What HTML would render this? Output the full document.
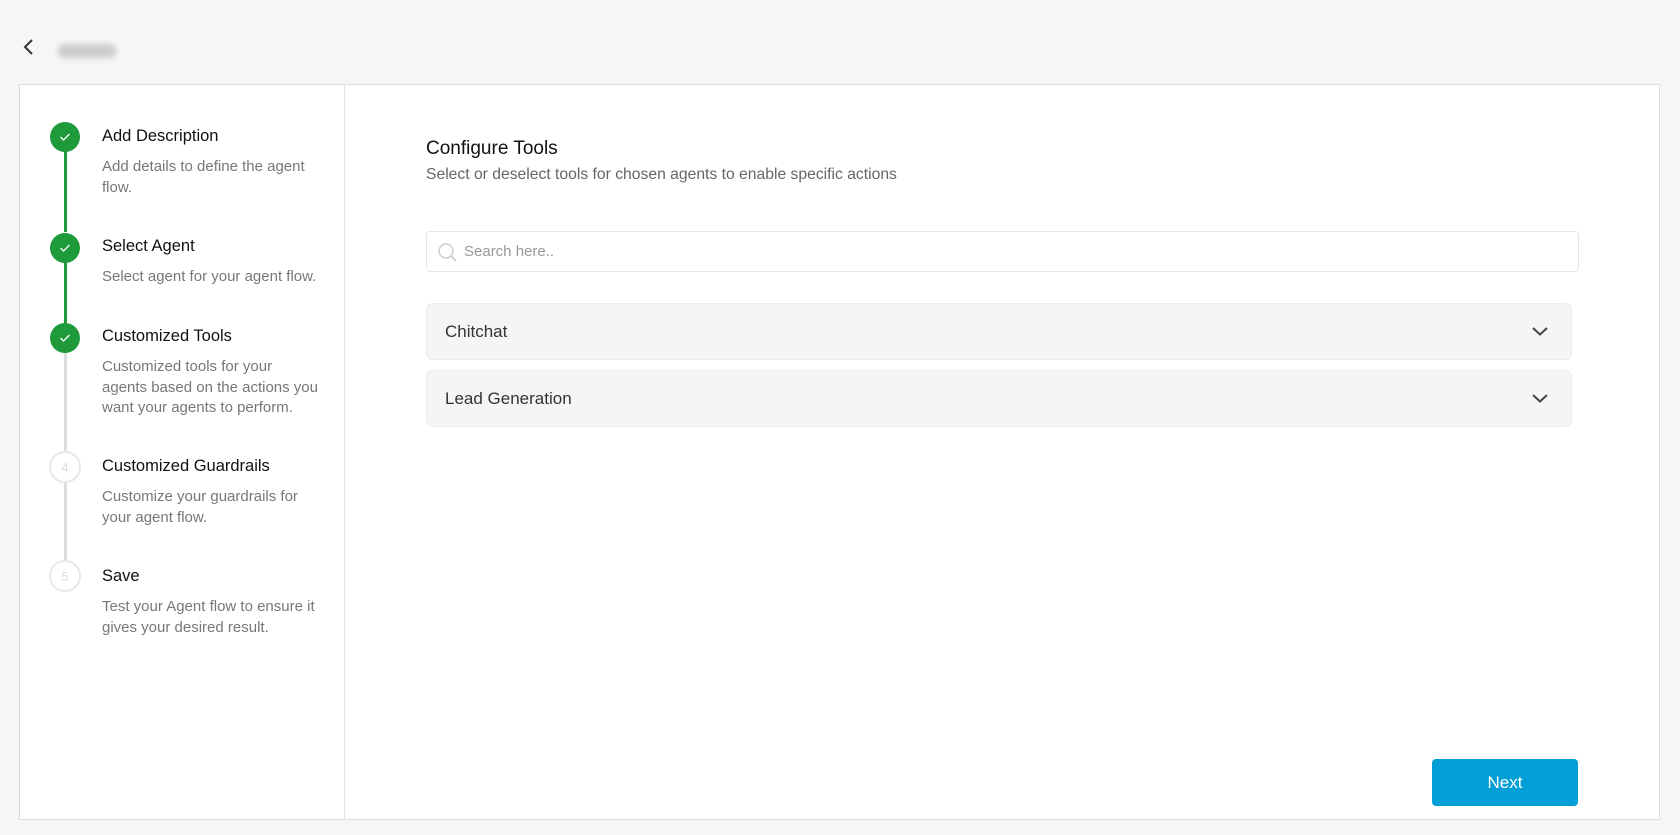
<!DOCTYPE html>
<html><head><meta charset="utf-8"><style>
*{box-sizing:border-box;margin:0;padding:0}
body{width:1680px;height:835px;background:#f6f6f6;font-family:"Liberation Sans",sans-serif;position:relative;overflow:hidden;color:#111}
.abs{position:absolute}
.card{left:19px;top:84px;width:1641px;height:736px;background:#fff;border:1px solid #dedede}
.div{left:344px;top:84px;width:1px;height:736px;background:#e2e2e2}
.circ{width:30px;height:30px;border-radius:50%;left:50px;display:flex;align-items:center;justify-content:center}
.done{background:#1e9a3a}
.todo{background:#fff;border:2px solid #e8e8e8;color:#ddd;font-size:13px;width:32px;height:32px;left:49px}
.line{left:64px;width:3px}
.t{left:102px;font-size:16.5px;color:#111;line-height:20px}
.d{left:102px;font-size:15px;color:#777;line-height:20.5px;width:216px}
.acc{left:426px;width:1146px;height:57px;background:#f5f5f5;border:1px solid #ececec;border-radius:7px}
.acc span{position:absolute;left:18px;top:18px;font-size:17px;color:#333}
.acc svg{position:absolute;right:22px;top:21px}
</style></head><body>
<svg class="abs" style="left:22px;top:38px" width="14" height="18" viewBox="0 0 14 18"><path d="M10 2 L3 9 L10 16" fill="none" stroke="#333" stroke-width="2"/></svg>
<div class="abs" style="left:58px;top:44px;width:58px;height:14px;background:#ccc;border-radius:6px;filter:blur(3px)"></div>
<div class="abs card"></div>
<div class="abs div"></div>

<div class="abs line" style="top:150px;height:82px;background:#1e9a3a"></div>
<div class="abs line" style="top:261px;height:62px;background:#1e9a3a"></div>
<div class="abs line" style="top:351px;height:101px;background:#ddd"></div>
<div class="abs line" style="top:481px;height:80px;background:#ddd"></div>

<div class="abs circ done" style="top:122px"><svg width="12" height="10" viewBox="0 0 12 10"><path d="M1.5 5 L4.5 8 L10.5 2" fill="none" stroke="#fff" stroke-width="1.3"/></svg></div>
<div class="abs circ done" style="top:233px"><svg width="12" height="10" viewBox="0 0 12 10"><path d="M1.5 5 L4.5 8 L10.5 2" fill="none" stroke="#fff" stroke-width="1.3"/></svg></div>
<div class="abs circ done" style="top:323px"><svg width="12" height="10" viewBox="0 0 12 10"><path d="M1.5 5 L4.5 8 L10.5 2" fill="none" stroke="#fff" stroke-width="1.3"/></svg></div>
<div class="abs circ todo" style="top:451px">4</div>
<div class="abs circ todo" style="top:560px">5</div>

<div class="abs t" style="top:126px">Add Description</div>
<div class="abs d" style="top:157px">Add details to define the agent flow.</div>
<div class="abs t" style="top:236px">Select Agent</div>
<div class="abs d" style="top:267px">Select agent for your agent flow.</div>
<div class="abs t" style="top:326px">Customized Tools</div>
<div class="abs d" style="top:357px">Customized tools for your agents based on the actions you want your agents to perform.</div>
<div class="abs t" style="top:456px">Customized Guardrails</div>
<div class="abs d" style="top:487px">Customize your guardrails for your agent flow.</div>
<div class="abs t" style="top:566px">Save</div>
<div class="abs d" style="top:597px">Test your Agent flow to ensure it gives your desired result.</div>

<div class="abs" style="left:426px;top:138px;font-size:19px;color:#111">Configure Tools</div>
<div class="abs" style="left:426px;top:166px;font-size:15.7px;color:#666">Select or deselect tools for chosen agents to enable specific actions</div>

<div class="abs" style="left:426px;top:231px;width:1153px;height:41px;border:1px solid #e6e6e6;border-radius:4px;background:#fff">
<svg class="abs" style="left:10px;top:10px" width="22" height="22" viewBox="0 0 22 22"><circle cx="9" cy="9" r="7" fill="none" stroke="#ccc" stroke-width="1.4"/><path d="M14 14 L19 19" stroke="#ccc" stroke-width="1.6"/></svg>
<span class="abs" style="left:37px;top:11px;font-size:15px;color:#999">Search here..</span>
</div>

<div class="abs acc" style="top:303px"><span>Chitchat</span><svg width="18" height="12" viewBox="0 0 18 12"><path d="M2 3 L9 9.5 L16 3" fill="none" stroke="#444" stroke-width="2"/></svg></div>
<div class="abs acc" style="top:370px"><span>Lead Generation</span><svg width="18" height="12" viewBox="0 0 18 12"><path d="M2 3 L9 9.5 L16 3" fill="none" stroke="#444" stroke-width="2"/></svg></div>

<div class="abs" style="left:1432px;top:759px;width:146px;height:47px;background:#049fd6;border-radius:4px;color:#fff;font-size:17px;display:flex;align-items:center;justify-content:center">Next</div>
</body></html>
